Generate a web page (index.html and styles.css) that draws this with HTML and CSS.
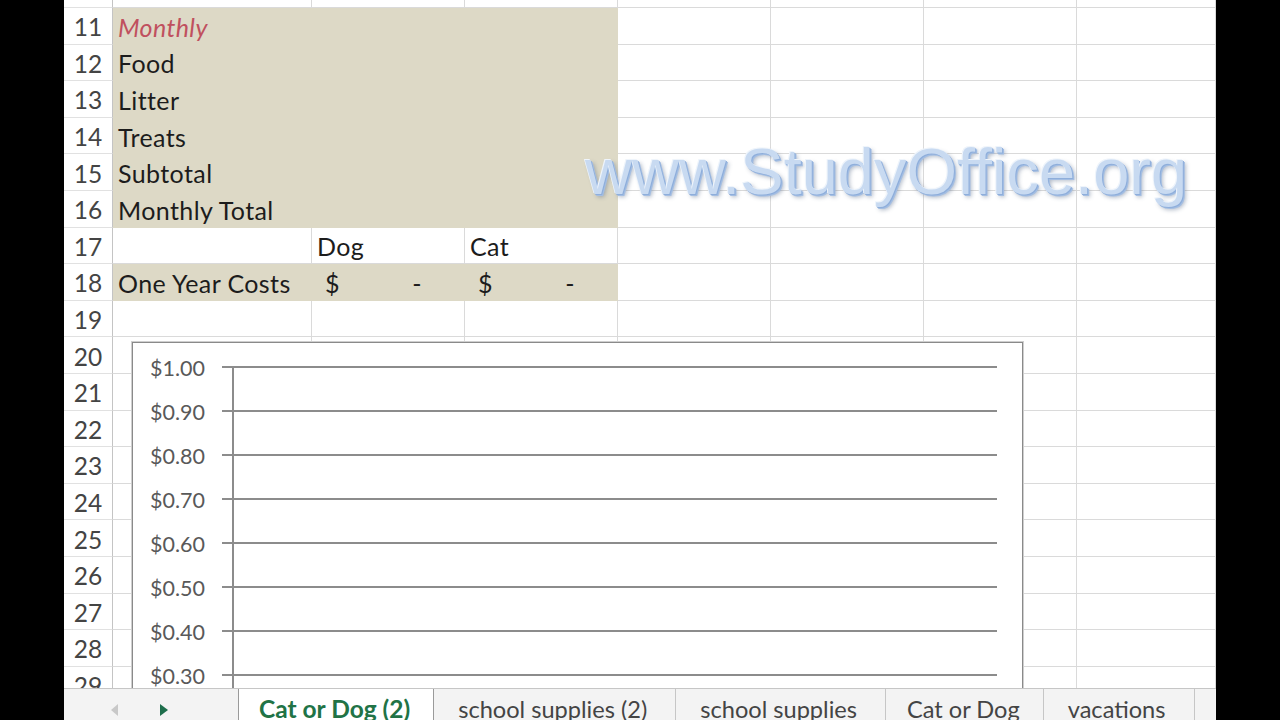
FILE: index.html
```html
<!DOCTYPE html>
<html lang="en">
<head>
<meta charset="utf-8">
<title>Cat or Dog (2)</title>
<link rel="stylesheet" href="styles.css">
</head>
<body>
<div class="screen">
  <div class="bar"></div>
  <div class="app">
    <div class="sheet">
      <div class="grid">
        <div class="rh top"></div><div class="c top"></div><div class="c top"></div><div class="c top"></div><div class="c top"></div><div class="c top"></div><div class="c top"></div><div class="c top"></div>

        <div class="rh">11</div><div class="c s"><span class="italic">Monthly</span></div><div class="c s"></div><div class="c s"></div><div class="c"></div><div class="c"></div><div class="c"></div><div class="c"></div>
        <div class="rh">12</div><div class="c s">Food</div><div class="c s"></div><div class="c s"></div><div class="c"></div><div class="c"></div><div class="c"></div><div class="c"></div>
        <div class="rh">13</div><div class="c s">Litter</div><div class="c s"></div><div class="c s"></div><div class="c"></div><div class="c"></div><div class="c"></div><div class="c"></div>
        <div class="rh">14</div><div class="c s">Treats</div><div class="c s"></div><div class="c s"></div><div class="c"></div><div class="c"></div><div class="c"></div><div class="c"></div>
        <div class="rh">15</div><div class="c s">Subtotal</div><div class="c s"></div><div class="c s"></div><div class="c"></div><div class="c"></div><div class="c"></div><div class="c"></div>
        <div class="rh">16</div><div class="c s">Monthly Total</div><div class="c s"></div><div class="c s"></div><div class="c"></div><div class="c"></div><div class="c"></div><div class="c"></div>
        <div class="rh">17</div><div class="c"></div><div class="c">Dog</div><div class="c">Cat</div><div class="c"></div><div class="c"></div><div class="c"></div><div class="c"></div>
        <div class="rh">18</div><div class="c s">One Year Costs</div><div class="c s acct"><span>$</span><span>-</span></div><div class="c s acct"><span>$</span><span>-</span></div><div class="c"></div><div class="c"></div><div class="c"></div><div class="c"></div>
        <div class="rh">19</div><div class="c"></div><div class="c"></div><div class="c"></div><div class="c"></div><div class="c"></div><div class="c"></div><div class="c"></div>
        <div class="rh">20</div><div class="c"></div><div class="c"></div><div class="c"></div><div class="c"></div><div class="c"></div><div class="c"></div><div class="c"></div>
        <div class="rh">21</div><div class="c"></div><div class="c"></div><div class="c"></div><div class="c"></div><div class="c"></div><div class="c"></div><div class="c"></div>
        <div class="rh">22</div><div class="c"></div><div class="c"></div><div class="c"></div><div class="c"></div><div class="c"></div><div class="c"></div><div class="c"></div>
        <div class="rh">23</div><div class="c"></div><div class="c"></div><div class="c"></div><div class="c"></div><div class="c"></div><div class="c"></div><div class="c"></div>
        <div class="rh">24</div><div class="c"></div><div class="c"></div><div class="c"></div><div class="c"></div><div class="c"></div><div class="c"></div><div class="c"></div>
        <div class="rh">25</div><div class="c"></div><div class="c"></div><div class="c"></div><div class="c"></div><div class="c"></div><div class="c"></div><div class="c"></div>
        <div class="rh">26</div><div class="c"></div><div class="c"></div><div class="c"></div><div class="c"></div><div class="c"></div><div class="c"></div><div class="c"></div>
        <div class="rh">27</div><div class="c"></div><div class="c"></div><div class="c"></div><div class="c"></div><div class="c"></div><div class="c"></div><div class="c"></div>
        <div class="rh">28</div><div class="c"></div><div class="c"></div><div class="c"></div><div class="c"></div><div class="c"></div><div class="c"></div><div class="c"></div>
        <div class="rh">29</div><div class="c"></div><div class="c"></div><div class="c"></div><div class="c"></div><div class="c"></div><div class="c"></div><div class="c"></div>
      </div>

      <div class="chart">
        <div class="plot">
          <div class="prow"><span class="lbl">$1.00</span><span class="gl"></span></div>
          <div class="prow"><span class="lbl">$0.90</span><span class="gl"></span></div>
          <div class="prow"><span class="lbl">$0.80</span><span class="gl"></span></div>
          <div class="prow"><span class="lbl">$0.70</span><span class="gl"></span></div>
          <div class="prow"><span class="lbl">$0.60</span><span class="gl"></span></div>
          <div class="prow"><span class="lbl">$0.50</span><span class="gl"></span></div>
          <div class="prow"><span class="lbl">$0.40</span><span class="gl"></span></div>
          <div class="prow"><span class="lbl">$0.30</span><span class="gl"></span></div>
          <div class="prow"><span class="lbl">$0.20</span><span class="gl"></span></div>
        </div>
        <div class="axis"></div>
      </div>

      <div class="watermark">www.StudyOffice.org</div>
    </div>

    <div class="tabs">
      <div class="nav">
        <span class="arrow left"></span>
        <span class="arrow right"></span>
      </div>
      <div class="tab active">Cat or Dog (2)</div>
      <div class="tab">school supplies (2)</div>
      <div class="tab">school supplies</div>
      <div class="tab narrow">Cat or Dog</div>
      <div class="tab">vacations</div>
      <div class="tab-rest"></div>
    </div>
  </div>
  <div class="bar"></div>
</div>
</body>
</html>
```

FILE: styles.css
```css
* { box-sizing: border-box; }

html, body {
  margin: 0;
  padding: 0;
  background: #000;
}

.screen {
  display: flex;
  width: 1280px;
  height: 720px;
  overflow: hidden;
}

.bar {
  width: 64px;
  flex: 0 0 64px;
  background: #000;
}

.app {
  width: 1152px;
  flex: 0 0 1152px;
  display: flex;
  flex-direction: column;
  background: #fff;
  font-family: Lato, "Open Sans", sans-serif;
}

.sheet {
  position: relative;
  height: 688px;
  flex: 0 0 688px;
  overflow: hidden;
}

.grid {
  display: grid;
  grid-template-columns: 49px 199px repeat(5, 153px) 139px;
  grid-template-rows: 8px repeat(19, 36.6px);
}

.rh {
  display: flex;
  align-items: center;
  justify-content: center;
  border-right: 1px solid #c4c4c4;
  border-bottom: 1px solid #e1e1e1;
  color: #444;
  font-size: 24.5px;
  padding-top: 2px;
}

.c {
  display: flex;
  align-items: center;
  padding: 2px 0 0 5px;
  border-right: 1px solid #dadada;
  border-bottom: 1px solid #dadada;
  color: #1c1c1c;
  font-size: 25px;
  letter-spacing: 0.4px;
  white-space: nowrap;
}

.c.s {
  background: #ddd9c6;
  border-color: #ddd9c6;
}

.italic {
  font-style: italic;
  color: #c0505e;
}

.acct {
  justify-content: space-between;
  padding: 2px 42px 0 13px;
}

/* chart */
.chart {
  position: absolute;
  left: 68px;
  top: 342px;
  width: 891px;
  height: 420px;
  background: #fff;
  border: 1px solid #8a8a8a;
  box-shadow: 0 0 0 1px #cfcfcf;
}

.plot {
  padding-top: 2px;
}

.prow {
  display: grid;
  grid-template-columns: 72px 17px 775px;
  height: 44px;
  align-items: center;
}

.lbl {
  grid-column: 1;
  text-align: right;
  font-size: 21.5px;
  color: #595959;
  padding-top: 1px;
}

.gl {
  grid-column: 3;
  height: 0;
  border-top: 2px solid #8c8c8c;
}

.axis {
  position: absolute;
  left: 99px;
  top: 23px;
  bottom: 0;
  width: 2px;
  background: #8c8c8c;
}

/* watermark */
.watermark {
  position: absolute;
  left: 521px;
  top: 139px;
  font-family: "Liberation Sans", Arial, sans-serif;
  font-size: 65px;
  line-height: 65px;
  letter-spacing: 0;
  color: #c8daf1;
  text-shadow:
    -1px -1px 0 #eef4fb,
    1px 1px 0 #8eaedb,
    2px 2px 0 #a4bee2,
    3px 3px 4px rgba(80, 100, 130, 0.45);
  white-space: nowrap;
}

/* sheet tabs */
.tabs {
  display: flex;
  height: 32px;
  flex: 0 0 32px;
  background: #f3f3f3;
  border-top: 1px solid #c6c6c6;
  overflow: hidden;
}

.nav {
  width: 174px;
  flex: 0 0 174px;
  display: flex;
  align-items: center;
  padding-top: 10px;
}

.arrow {
  width: 0;
  height: 0;
  border-top: 6px solid transparent;
  border-bottom: 6px solid transparent;
}

.arrow.left {
  margin-left: 47px;
  border-right: 7px solid #c8c8c8;
}

.arrow.right {
  margin-left: 42px;
  border-left: 8px solid #1e6e4c;
}

.tab {
  padding: 6px 28px 0 24px;
  font-size: 23.6px;
  line-height: 28px;
  color: #444;
  white-space: nowrap;
  border-right: 1px solid #c6c6c6;
}

.tab.narrow {
  padding: 6px 23px 0 21px;
}

.tab.active {
  background: #fff;
  color: #217346;
  font-weight: bold;
  font-size: 24.5px;
  padding: 7px 23px 0 20px;
  margin-top: -1px;
  border-left: 1px solid #9a9a9a;
  border-right: 1px solid #9a9a9a;
}

.tab-rest {
  flex: 1;
}
```
